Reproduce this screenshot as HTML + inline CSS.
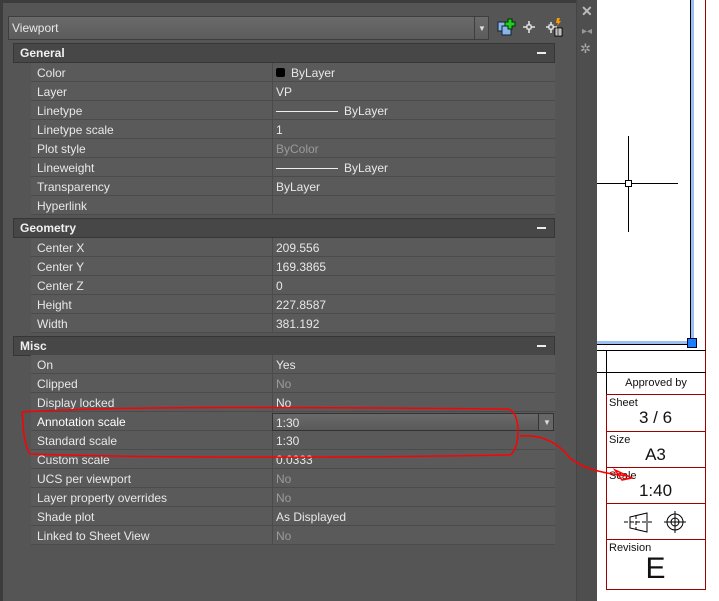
<!DOCTYPE html><html><head><style>
*{margin:0;padding:0;box-sizing:border-box}
body{width:719px;height:601px;overflow:hidden;background:#555;font-family:"Liberation Sans",sans-serif;font-size:12px;color:#e8e8e8;position:relative}
.a{position:absolute}
.h{position:absolute;left:13px;width:542px;height:20px;background:#474747;border:1px solid #363636;font-weight:bold;padding:2px 0 0 6px;color:#f0f0f0}
.h i{position:absolute;right:8px;top:8px;width:9px;height:2px;background:#eee}
.r{position:absolute;left:31px;width:524px;height:19px;background:#5a5a5a;border-bottom:1px solid #4b4b4b}
.r b{font-weight:normal;position:absolute;left:6px;top:3px}
.r u{text-decoration:none;position:absolute;left:245px;top:3px}
.r s{text-decoration:none;position:absolute;left:245px;top:3px;color:#9a9a9a}
.r:after{content:"";position:absolute;left:241px;top:0;bottom:0;width:1px;background:#4b4b4b}
.ln{display:inline-block;width:62px;height:1px;background:#eee;vertical-align:middle;margin-right:6px}
.tb{position:absolute;left:606px;width:99px;border-top:1px solid #a00000;color:#111;font-size:11px}
</style></head><body>
<div class="a" style="left:0;top:0;width:576px;height:601px;background:#555;border-left:3px solid #3c3c3c;border-top:3px solid #3c3c3c"></div>
<div class="a" style="left:576px;top:0;width:21px;height:601px;background:#4e4e4e;border-left:1px solid #444"></div>
<div class="a" style="left:581px;top:3px;color:#bbb;font-size:14px;font-weight:bold">✕</div>
<div class="a" style="left:582px;top:26px;color:#999;font-size:10px">▸◂</div>
<div class="a" style="left:580px;top:41px;color:#aaa;font-size:13px">✲</div>
<div class="a" style="left:8px;top:16px;width:481px;height:24px;background:linear-gradient(#6a6a6a,#5c5c5c);border:1px solid #3e3e3e;padding:4px 0 0 3px">Viewport</div>
<div class="a" style="left:474px;top:16px;width:15px;height:24px;border-left:1px solid #3e3e3e;color:#ddd;font-size:8px;padding:8px 0 0 3px">▼</div>
<svg class="a" style="left:495px;top:17px" width="75" height="22"><rect x="3" y="5" width="9" height="9" fill="#8ab4e8" stroke="#123"/><rect x="7" y="9" width="9" height="9" fill="#8ab4e8" stroke="#123"/><path d="M13 2h4v3h3v4h-3v3h-4v-3h-3v-4h3z" fill="#2c2" stroke="#030"/><path d="M28 10h12M34 4v12" stroke="#fff" stroke-width="1.3"/><rect x="32" y="8" width="4" height="4" fill="#555" stroke="#fff"/><path d="M51 10h11M56 5v11" stroke="#fff" stroke-width="1.3"/><rect x="54" y="8" width="4" height="4" fill="#555" stroke="#fff"/><rect x="60" y="11" width="7" height="8" fill="#fff" stroke="#000"/><path d="M61 13h5M61 15h5M61 17h5M63 11v8" stroke="#000" stroke-width=".6"/><path d="M62 1l3 0-1 3 2 0-4 5 1-3-2 0z" fill="#f90"/></svg>
<div class="h" style="top:43px">General<i></i></div>
<div class="r" style="top:63px"><b>Color</b><u><span style="display:inline-block;width:9px;height:9px;background:#000;border-radius:2px;margin-right:6px"></span>ByLayer</u></div>
<div class="r" style="top:82px"><b>Layer</b><u>VP</u></div>
<div class="r" style="top:101px"><b>Linetype</b><u><span class="ln"></span>ByLayer</u></div>
<div class="r" style="top:120px"><b>Linetype scale</b><u>1</u></div>
<div class="r" style="top:139px"><b>Plot style</b><s>ByColor</s></div>
<div class="r" style="top:158px"><b>Lineweight</b><u><span class="ln"></span>ByLayer</u></div>
<div class="r" style="top:177px"><b>Transparency</b><u>ByLayer</u></div>
<div class="r" style="top:196px"><b>Hyperlink</b></div>
<div class="h" style="top:218px">Geometry<i></i></div>
<div class="r" style="top:238px"><b>Center X</b><u>209.556</u></div>
<div class="r" style="top:257px"><b>Center Y</b><u>169.3865</u></div>
<div class="r" style="top:276px"><b>Center Z</b><u>0</u></div>
<div class="r" style="top:295px"><b>Height</b><u>227.8587</u></div>
<div class="r" style="top:314px"><b>Width</b><u>381.192</u></div>
<div class="h" style="top:336px">Misc<i></i></div>
<div class="r" style="top:355px"><b>On</b><u>Yes</u></div>
<div class="r" style="top:374px"><b>Clipped</b><s>No</s></div>
<div class="r" style="top:393px"><b>Display locked</b><u>No</u></div>
<div class="r" style="top:412px"><b style="color:#fff">Annotation scale</b></div>
<div class="a" style="left:272px;top:413px;width:282px;height:18px;background:linear-gradient(#6a6a6a,#5a5a5a);border:1px solid #333;padding:2px 0 0 3px">1:30</div>
<div class="a" style="left:538px;top:413px;width:16px;height:18px;background:#666;border:1px solid #333;color:#ddd;font-size:8px;padding:4px 0 0 4px">▼</div>
<div class="r" style="top:431px"><b>Standard scale</b><u>1:30</u></div>
<div class="r" style="top:450px"><b>Custom scale</b><u>0.0333</u></div>
<div class="r" style="top:469px"><b>UCS per viewport</b><s>No</s></div>
<div class="r" style="top:488px"><b>Layer property overrides</b><s>No</s></div>
<div class="r" style="top:507px"><b>Shade plot</b><u>As Displayed</u></div>
<div class="r" style="top:526px"><b>Linked to Sheet View</b><s>No</s></div>
<div class="a" style="left:597px;top:0;width:122px;height:601px;background:#fff"></div>
<div class="a" style="left:690px;top:0;width:4px;height:345px;background:#9cc0f4;border-left:1px solid #000"></div>
<div class="a" style="left:597px;top:341px;width:97px;height:4px;background:#9cc0f4;border-bottom:1px solid #000"></div>
<div class="a" style="left:687px;top:338px;width:10px;height:10px;background:#1a7fff;border:1px solid #003"></div>
<div class="a" style="left:705px;top:0;width:1px;height:590px;background:#a00000"></div>
<div class="a" style="left:597px;top:183px;width:81px;height:1px;background:#000"></div>
<div class="a" style="left:628px;top:136px;width:1px;height:96px;background:#000"></div>
<div class="a" style="left:625px;top:180px;width:7px;height:7px;background:#fff;border:1px solid #000"></div>
<div class="a" style="left:597px;top:350px;width:109px;height:1px;background:#000"></div>
<div class="a" style="left:597px;top:372px;width:109px;height:1px;background:#000"></div>
<div class="a" style="left:606px;top:350px;width:1px;height:240px;background:#a00000"></div>
<div class="a" style="left:606px;top:350px;width:1px;height:44px;background:#000"></div>
<div class="tb" style="top:394px;height:37px;padding:2px 3px">Sheet<div style="font-size:17px;text-align:center;margin-top:-1px">3 / 6</div></div>
<div class="tb" style="top:431px;height:36px;padding:2px 3px">Size<div style="font-size:17px;text-align:center;margin-top:-1px">A3</div></div>
<div class="tb" style="top:467px;height:36px;padding:2px 3px">Scale<div style="font-size:17px;text-align:center;margin-top:-1px">1:40</div></div>
<div class="tb" style="top:503px;height:36px"><svg width="99" height="36"><path d="M24 13l17-4v19l-17-4z" stroke="#000" fill="none"/><path d="M18 18h28M30 11v14" stroke="#000" fill="none" stroke-dasharray="4 2"/><circle cx="69" cy="18" r="8" stroke="#000" fill="none"/><circle cx="69" cy="18" r="4" stroke="#000" fill="none"/><path d="M58 18h22M69 7v22" stroke="#000"/></svg></div>
<div class="tb" style="top:539px;height:51px;padding:2px 3px;border-bottom:1px solid #a00000">Revision<div style="font-size:30px;text-align:center;line-height:30px">E</div></div>
<div class="a" style="left:607px;top:377px;width:98px;text-align:center;font-size:11px;color:#111">Approved by</div>
<svg class="a" style="left:0;top:0" width="719" height="601"><g fill="none" stroke="#f00" stroke-width="1.5"><path d="M22 412C120 406 300 407 508 409C522 412 520 450 510 455C350 458 150 458 30 454C22 440 24 425 22 412"/><path d="M520 436C545 434 560 445 570 458C582 468 600 473 628 476"/><path d="M615 470L622 480L632 478Z"/></g></svg>
</body></html>
